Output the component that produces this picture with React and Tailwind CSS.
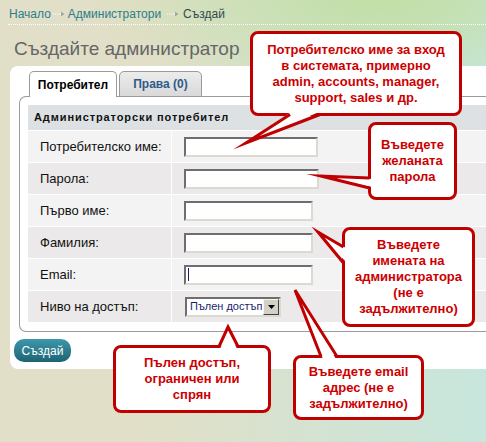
import React from "react";

function Crumb() {
  return (
    <svg width="12" height="6" viewBox="0 0 12 6" className="shrink-0">
      <rect x="0" y="2.5" width="1" height="1" fill="#ffffff" />
      <rect x="2" y="2.5" width="1" height="1" fill="#ffffff" />
      <rect x="4" y="2.5" width="1" height="1" fill="#ffffff" />
      <rect x="6" y="2.5" width="2" height="1" fill="#ffffff" />
      <path d="M8 0.5 L11.5 3 L8 5.5 Z" fill="#a3a89f" />
    </svg>
  );
}

function Field({ w, caret }) {
  return (
    <div
      className={`h-[20px] ${w} bg-white border-2 border-t-[#6e6e6e] border-l-[#6e6e6e] border-r-[#dcd9d2] border-b-[#dcd9d2] flex items-center`}
    >
      {caret && <div className="ml-[2px] w-px h-[13px] bg-[#1c1c6e]" />}
    </div>
  );
}

function Row({ label, shade, children }) {
  const bg = shade ? "bg-[#ebe9e9]" : "bg-[#f3f3f3]";
  return (
    <div className="grid grid-cols-[143px_1fr] gap-x-px h-[31px] mt-px">
      <div className={`${bg} flex items-center pl-[12px] text-[13px] text-[#111]`}>{label}</div>
      <div className={`${bg} flex items-center pl-[12px]`}>{children}</div>
    </div>
  );
}

const bubble =
  "absolute bg-white border-[3px] border-[#c00000] rounded-[8px] flex items-center justify-center text-center font-bold text-[13px] leading-[16px] text-[#cc0000]";

export default function App() {
  return (
    <div className="relative w-[486px] h-[442px] overflow-hidden font-['Liberation_Sans',Arial,sans-serif] [background:radial-gradient(ellipse_60%_22%_at_78%_0%,#c2dfa5,transparent),linear-gradient(90deg,#e1dfc7_30%,#c7e6dc)]">
      {/* breadcrumb */}
      <div className="ml-[8px] h-[25px] pt-[4px] border-b border-dotted border-white flex items-center text-[12px]">
        <span className="ml-px text-[#2b7d8c]">Начало</span>
        <span className="ml-[2px]"><Crumb /></span>
        <span className="ml-[3px] text-[#2b7d8c]">Администратори</span>
        <span className="ml-[6px]"><Crumb /></span>
        <span className="ml-[4px] text-[#2f4a4c]">Създай</span>
      </div>

      <h1 className="mt-[12px] ml-[14px] text-[19px] leading-[24px] text-[#666]">Създайте администратор</h1>

      {/* card */}
      <div className="ml-[10px] mt-[5px] bg-white rounded-l-[8px] pt-[5px] pl-[9px] pb-[7px]">
        <div className="flex ml-[10px] gap-[2px] -mb-px relative z-10">
          <div className="w-[88px] h-[26px] bg-white border border-b-0 border-[#9a9a9a] rounded-t-[5px] flex items-center justify-center font-bold text-[12px] text-black">
            Потребител
          </div>
          <div className="w-[83px] h-[26px] bg-[linear-gradient(#ececec,#d9d9d9)] border border-[#9a9a9a] rounded-t-[5px] flex items-center justify-center font-bold text-[12px] text-[#2d5b8a]">
            Права (0)
          </div>
        </div>
        <div className="border border-r-0 border-[#9a9a9a] rounded-l-[7px] pt-[8px] pl-[8px] pb-[9px]">
          <div className="h-[25px] bg-[#dde1e4] flex items-center pl-[6px] font-bold text-[11px] tracking-[0.9px] text-[#111]">
            Администраторски потребител
          </div>
          <Row label="Потребителско име:">
            <Field w="w-[134px]" />
          </Row>
          <Row label="Парола:" shade>
            <Field w="w-[135px]" />
          </Row>
          <Row label="Първо име:">
            <Field w="w-[129px]" />
          </Row>
          <Row label="Фамилия:" shade>
            <Field w="w-[129px]" />
          </Row>
          <Row label="Email:">
            <Field w="w-[129px]" caret />
          </Row>
          <Row label="Ниво на достъп:" shade>
            <div className="ml-px h-[20px] w-[96px] bg-white border-2 border-t-[#6e6e6e] border-l-[#6e6e6e] border-r-[#dcd9d2] border-b-[#dcd9d2] flex items-center justify-between">
              <span className="pl-[3px] text-[11px] text-[#1d1d6b] whitespace-nowrap overflow-hidden">Пълен достъп</span>
              <div className="w-[16px] h-[16px] shrink-0 bg-[#d4d0c8] border border-t-[#f4f4f4] border-l-[#f4f4f4] border-r-[#404040] border-b-[#404040] flex items-center justify-center">
                <svg width="7" height="4" viewBox="0 0 7 4"><path d="M0 0 H7 L3.5 4 Z" fill="#000" /></svg>
              </div>
            </div>
          </Row>
        </div>
        <button className="mt-[7px] -ml-[5px] w-[57px] h-[23px] rounded-[10px] bg-[linear-gradient(#3e97aa,#1c6474)] text-white text-[12px] flex items-center justify-center">
          Създай
        </button>
      </div>

      {/* callouts */}
      <div className={`${bubble} left-[250px] top-[31px] w-[212px] h-[85px]`}>
        <div>Потребителско име за вход<br />в системата, примерно<br />admin, accounts, manager,<br />support, sales и др.</div>
      </div>
      <div className={`${bubble} left-[368px] top-[122px] w-[89px] h-[78px]`}>
        <div>Въведете<br />желаната<br />парола</div>
      </div>
      <div className={`${bubble} left-[342px] top-[227px] w-[133px] h-[100px]`}>
        <div>Въведете<br />имената на<br />администратора<br />(не е<br />задължително)</div>
      </div>
      <div className={`${bubble} left-[113px] top-[345px] w-[158px] h-[68px]`}>
        <div>Пълен достъп,<br />ограничен или<br />спрян</div>
      </div>
      <div className={`${bubble} left-[293px] top-[355px] w-[131px] h-[65px]`}>
        <div>Въведете email<br />адрес (не е<br />задължително)</div>
      </div>

      <svg className="absolute left-0 top-0 pointer-events-none" width="486" height="442" viewBox="0 0 486 442">
        <g fill="#ffffff" stroke="none">
          <polygon points="291,112 319,112 246,143" />
          <polygon points="372,179 372,187 321,176" />
          <polygon points="346,248 346,262 318,232" />
          <polygon points="220,349 237,349 228,327" />
          <polygon points="323,359 336,359 295,290" />
        </g>
        <g fill="none" stroke="#c00000" strokeWidth="3" strokeLinejoin="miter" strokeMiterlimit="10">
          <polyline points="290,114.5 246,143 320,114.5" />
          <polyline points="369.5,178 321,176 369.5,188" />
          <polyline points="343.5,247 318,232 343.5,263" />
          <polyline points="219,346.5 228,327 238,346.5" />
          <polyline points="321,356.5 295,290 337,356.5" />
        </g>
      </svg>
    </div>
  );
}
